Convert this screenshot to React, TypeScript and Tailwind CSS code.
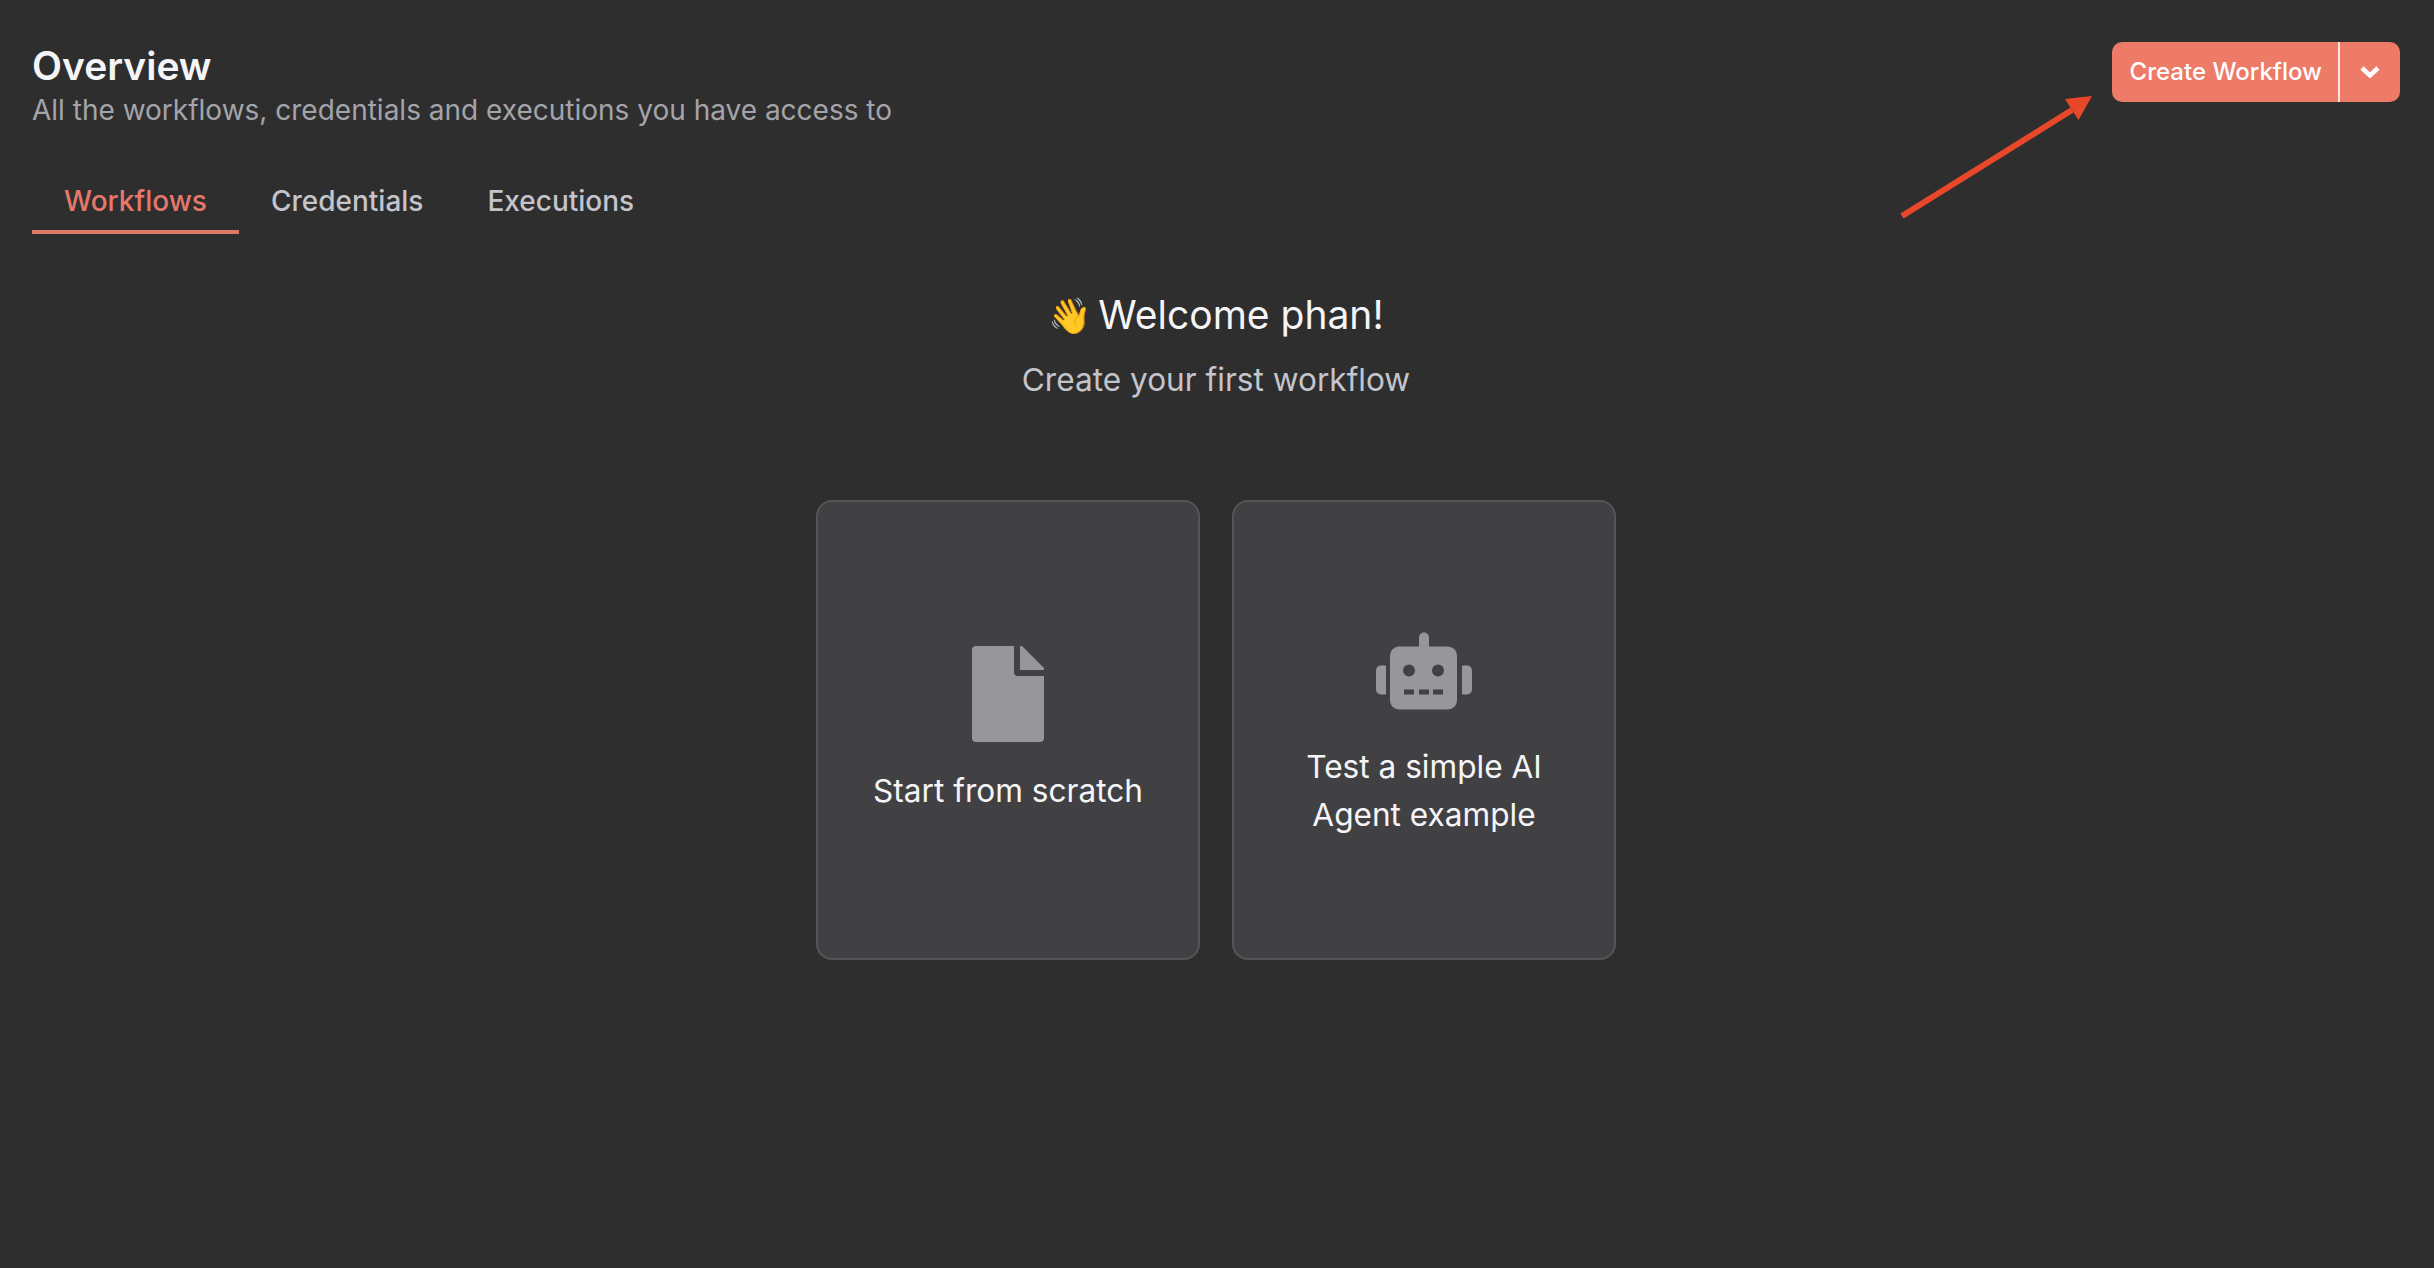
export default function App() {
  const Robot = () => (
    <svg width="96" height="96" viewBox="0 -10.5 96 96" className="block" fill="#97979b">
      <path d="M43 5a5 5 0 0 1 10 0v10H43z" />
      <rect x="14" y="14" width="67" height="63" rx="9" />
      <path d="M5 33h5v29H5a5 5 0 0 1-5-5V38a5 5 0 0 1 5-5z" />
      <path d="M86 33h5a5 5 0 0 1 5 5v19a5 5 0 0 1-5 5h-5z" />
      <circle cx="33" cy="38" r="6" fill="#414144" />
      <circle cx="62" cy="38" r="6" fill="#414144" />
      <rect x="28" y="57" width="10" height="5" fill="#414144" />
      <rect x="43" y="57" width="10" height="5" fill="#414144" />
      <rect x="57" y="57" width="10" height="5" fill="#414144" />
    </svg>
  );
  const File = () => (
    <svg width="72" height="96" viewBox="0 0 72 96" className="block" fill="#97979b">
      <path d="M4 0h38v26a4 4 0 0 0 4 4h26v62a4 4 0 0 1-4 4H4a4 4 0 0 1-4-4V4a4 4 0 0 1 4-4z" />
      <path d="M48 0h2l22 22v2H48z" />
    </svg>
  );
  return (
    <div className="relative min-h-[1268px] bg-[#2e2e2e] text-white font-['Inter',sans-serif]">
      <header className="flex items-start justify-between px-8 pt-[42px] pr-[34px]">
        <div>
          <h1 className="text-[39px] leading-[48px] font-semibold text-[#f5f5f7]">Overview</h1>
          <p className="text-[28px] leading-[40px] text-[#a4a4aa]">All the workflows, credentials and executions you have access to</p>
        </div>
        <div className="flex h-[60px] rounded-[10px] bg-[#ee7a68] text-[24px] font-medium text-white overflow-hidden">
          <span className="flex items-center pl-[18px] pr-[16px] border-r-2 border-[#fde8e4]">Create Workflow</span>
          <span className="flex w-[60px] items-center justify-center">
            <svg width="20" height="14" viewBox="0 0 20 14" fill="none" stroke="#fff" strokeWidth="4.5"><path d="M2 3l8 7.5L18 3" /></svg>
          </span>
        </div>
      </header>
      <nav className="mt-[39px] flex px-8 text-[28px] leading-[36px] font-medium text-[#c4c4cc]">
        <span className="border-b-4 border-[#dd7a68] px-8 pb-[11px] pt-[14px] text-[#e5786a]">Workflows</span>
        <span className="px-8 pb-[11px] pt-[14px]">Credentials</span>
        <span className="px-8 pb-[11px] pt-[14px]">Executions</span>
      </nav>
      <main className="flex flex-col items-center pr-[2px]">
        <h2 className="mt-[53px] flex items-center gap-[6px] text-[39px] leading-[56px] text-[#f5f5f7]">
          <span className="text-[35px]">👋</span>Welcome phan!
        </h2>
        <p className="mt-[13px] text-[31.6px] leading-[48px] text-[#c4c4cc]">Create your first workflow</p>
        <div className="mt-[96px] flex gap-8">
          <div className="flex h-[460px] w-[384px] flex-col items-center justify-center rounded-[16px] border-2 border-[#56565a] bg-[#414144] text-[31.6px] leading-[48px] text-[#f5f5f7]">
            <File />
            <p className="mt-[25px]">Start from scratch</p>
          </div>
          <div className="flex h-[460px] w-[384px] flex-col items-center justify-center rounded-[16px] border-2 border-[#56565a] bg-[#414144] text-center text-[31.6px] leading-[48px] text-[#f5f5f7]">
            <Robot />
            <p className="mt-[25px]">Test a simple AI<br />Agent example</p>
          </div>
        </div>
      </main>
      <svg className="absolute left-[1895px] top-[90px]" width="200" height="130" viewBox="0 0 200 130" fill="#e8472a">
        <path d="M7 126L177 20" stroke="#e8472a" strokeWidth="6" />
        <path d="M197 6L183.5 30L170 9z" />
      </svg>
    </div>
  );
}
